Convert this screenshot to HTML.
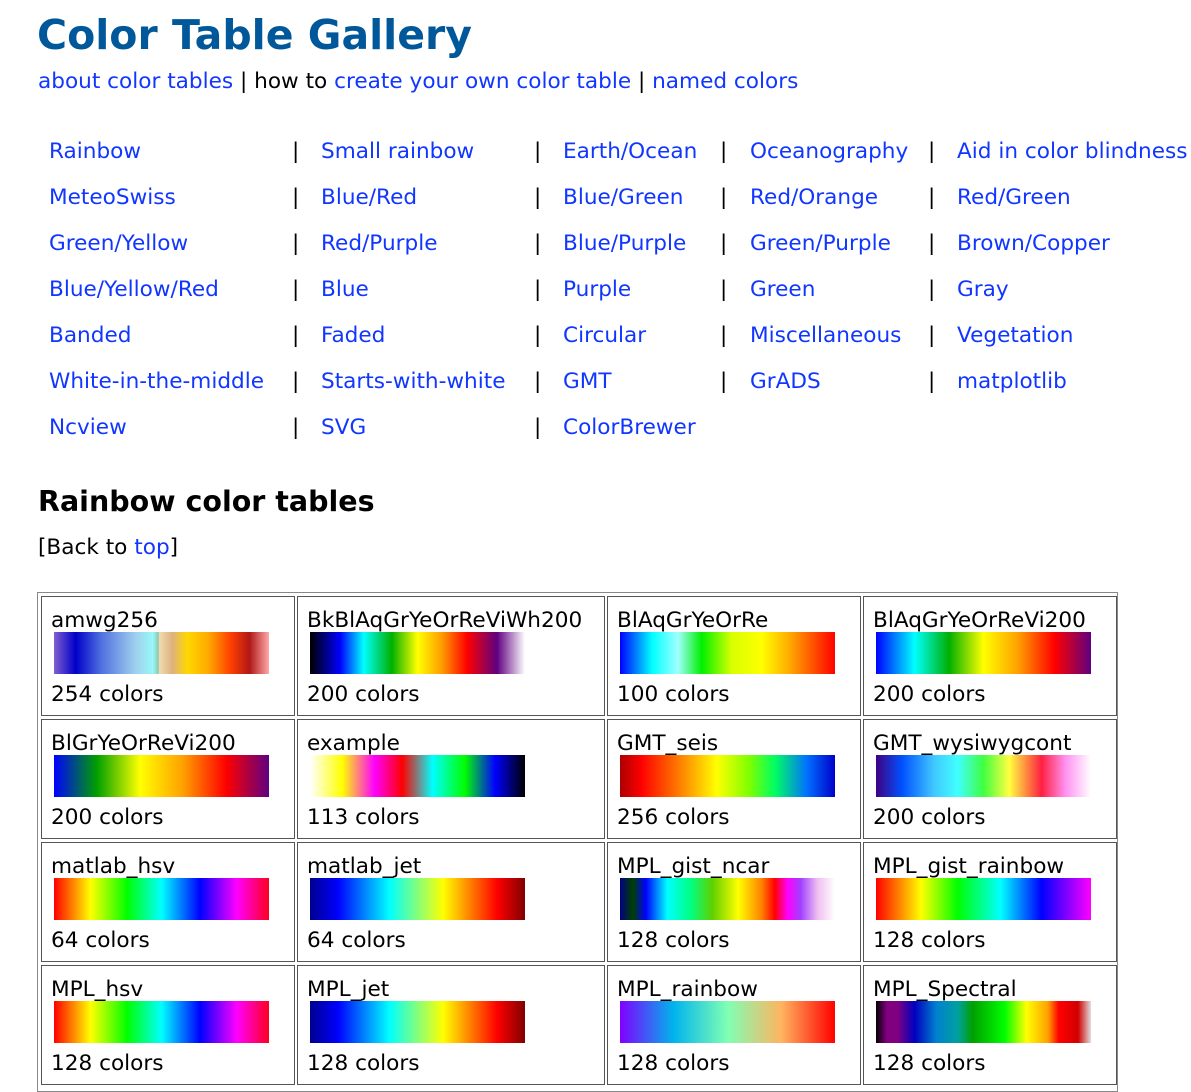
<!DOCTYPE html>
<html><head><meta charset="utf-8"><style>
body{margin:0;width:1191px;height:1082px;overflow:hidden;background:#fff;font-family:"DejaVu Sans","Liberation Sans",sans-serif;font-size:21.6px;color:#000;position:relative}
a{color:#1036ff;text-decoration:none}
.abs{position:absolute;white-space:nowrap;line-height:26px}
h1{position:absolute;left:37px;top:7px;margin:0;font-size:41px;font-weight:bold;color:#00589a;letter-spacing:0px;line-height:56px;white-space:nowrap}
h2{position:absolute;left:38px;top:485px;margin:0;font-size:28.5px;font-weight:bold;line-height:34px;white-space:nowrap}
.outer{position:absolute;left:37px;top:592px;width:1081px;height:500px;border:1px solid #888;box-sizing:border-box}
.cell{position:absolute;height:120px;border:1px solid #555;box-sizing:border-box}
.cell .n{position:absolute;left:9px;top:11px;line-height:26px;white-space:nowrap}
.cell .c{position:absolute;left:9px;top:85px;line-height:26px;white-space:nowrap}
.cell .b{position:absolute;left:12px;top:35px;width:215px;height:42px}
</style></head><body>
<h1>Color Table Gallery</h1>
<div class="abs" style="left:38px;top:69px"><a>about color tables</a> | how to <a>create your own color table</a> | <a>named colors</a></div>

<div class="abs" style="left:49px;top:139px"><a>Rainbow</a></div>
<div class="abs" style="left:49px;top:185px"><a>MeteoSwiss</a></div>
<div class="abs" style="left:49px;top:231px"><a>Green/Yellow</a></div>
<div class="abs" style="left:49px;top:277px"><a>Blue/Yellow/Red</a></div>
<div class="abs" style="left:49px;top:323px"><a>Banded</a></div>
<div class="abs" style="left:49px;top:369px"><a>White-in-the-middle</a></div>
<div class="abs" style="left:49px;top:415px"><a>Ncview</a></div>

<div class="abs" style="left:292px;line-height:46px;top:129px">|<br>|<br>|<br>|<br>|<br>|<br>|</div>
<div class="abs" style="left:321px;top:139px"><a>Small rainbow</a></div>
<div class="abs" style="left:321px;top:185px"><a>Blue/Red</a></div>
<div class="abs" style="left:321px;top:231px"><a>Red/Purple</a></div>
<div class="abs" style="left:321px;top:277px"><a>Blue</a></div>
<div class="abs" style="left:321px;top:323px"><a>Faded</a></div>
<div class="abs" style="left:321px;top:369px"><a>Starts-with-white</a></div>
<div class="abs" style="left:321px;top:415px"><a>SVG</a></div>

<div class="abs" style="left:534px;line-height:46px;top:129px">|<br>|<br>|<br>|<br>|<br>|<br>|</div>
<div class="abs" style="left:563px;top:139px"><a>Earth/Ocean</a></div>
<div class="abs" style="left:563px;top:185px"><a>Blue/Green</a></div>
<div class="abs" style="left:563px;top:231px"><a>Blue/Purple</a></div>
<div class="abs" style="left:563px;top:277px"><a>Purple</a></div>
<div class="abs" style="left:563px;top:323px"><a>Circular</a></div>
<div class="abs" style="left:563px;top:369px"><a>GMT</a></div>
<div class="abs" style="left:563px;top:415px"><a>ColorBrewer</a></div>

<div class="abs" style="left:720px;line-height:46px;top:129px">|<br>|<br>|<br>|<br>|<br>|</div>
<div class="abs" style="left:750px;top:139px"><a>Oceanography</a></div>
<div class="abs" style="left:750px;top:185px"><a>Red/Orange</a></div>
<div class="abs" style="left:750px;top:231px"><a>Green/Purple</a></div>
<div class="abs" style="left:750px;top:277px"><a>Green</a></div>
<div class="abs" style="left:750px;top:323px"><a>Miscellaneous</a></div>
<div class="abs" style="left:750px;top:369px"><a>GrADS</a></div>

<div class="abs" style="left:928px;line-height:46px;top:129px">|<br>|<br>|<br>|<br>|<br>|</div>
<div class="abs" style="left:957px;top:139px"><a>Aid in color blindness</a></div>
<div class="abs" style="left:957px;top:185px"><a>Red/Green</a></div>
<div class="abs" style="left:957px;top:231px"><a>Brown/Copper</a></div>
<div class="abs" style="left:957px;top:277px"><a>Gray</a></div>
<div class="abs" style="left:957px;top:323px"><a>Vegetation</a></div>
<div class="abs" style="left:957px;top:369px"><a>matplotlib</a></div>

<h2>Rainbow color tables</h2>
<div class="abs" style="left:38px;top:535px">[Back to <a>top</a>]</div>

<div class="outer"></div>
<!-- row 1 -->
<div class="cell" style="left:41px;top:596px;width:254px"><div class="n">amwg256</div><div class="b" style="background:linear-gradient(90deg,#8060d0 0%,#0000c8 10%,#5070e0 22%,#a0d0ee 38%,#98f8f8 46%,#90c8b0 48.5%,#f0dcb0 49%,#ddb080 55%,#ffd800 62%,#ffa800 72%,#ff4000 82%,#b01818 91%,#ffa8a8 100%)"></div><div class="c">254 colors</div></div>
<div class="cell" style="left:297px;top:596px;width:308px"><div class="n">BkBlAqGrYeOrReViWh200</div><div class="b" style="background:linear-gradient(90deg,#000 0%,#0000ff 14%,#00ffff 25%,#00b000 38%,#ffff00 50%,#ffa000 61%,#ff0000 73%,#600080 87%,#fff 100%)"></div><div class="c">200 colors</div></div>
<div class="cell" style="left:607px;top:596px;width:254px"><div class="n">BlAqGrYeOrRe</div><div class="b" style="background:linear-gradient(90deg,#0000ff 0%,#00ffff 15%,#a0ffff 27%,#00f000 38%,#d8ff00 52%,#ffff00 66%,#ffb000 78%,#ff0000 100%)"></div><div class="c">100 colors</div></div>
<div class="cell" style="left:863px;top:596px;width:254px"><div class="n">BlAqGrYeOrReVi200</div><div class="b" style="background:linear-gradient(90deg,#0000ff 0%,#00ffff 18%,#00b000 34%,#ffff00 50%,#ffa000 66%,#ff0000 83%,#600080 100%)"></div><div class="c">200 colors</div></div>
<!-- row 2 -->
<div class="cell" style="left:41px;top:719px;width:254px"><div class="n">BlGrYeOrReVi200</div><div class="b" style="background:linear-gradient(90deg,#0000ff 0%,#00a000 20%,#ffff00 40%,#ffa000 60%,#ff0000 80%,#600080 100%)"></div><div class="c">200 colors</div></div>
<div class="cell" style="left:297px;top:719px;width:308px"><div class="n">example</div><div class="b" style="background:linear-gradient(90deg,#fff 0%,#ffff00 15%,#ff00ff 30%,#ff0000 43%,#00ffff 57%,#00ff00 72%,#0000ff 86%,#000 100%)"></div><div class="c">113 colors</div></div>
<div class="cell" style="left:607px;top:719px;width:254px"><div class="n">GMT_seis</div><div class="b" style="background:linear-gradient(90deg,#aa0000 0%,#ff0000 10%,#ff8000 28%,#ffff00 45%,#80ff00 60%,#00ff60 72%,#0070ff 87%,#0000cc 100%)"></div><div class="c">256 colors</div></div>
<div class="cell" style="left:863px;top:719px;width:254px"><div class="n">GMT_wysiwygcont</div><div class="b" style="background:linear-gradient(90deg,#400080 0%,#0050ff 12%,#40c8ff 27%,#40ffff 38%,#40ff40 50%,#ffff40 62%,#ff2040 77%,#ff90f0 88%,#fff 100%)"></div><div class="c">200 colors</div></div>
<!-- row 3 -->
<div class="cell" style="left:41px;top:842px;width:254px"><div class="n">matlab_hsv</div><div class="b" style="background:linear-gradient(90deg,#ff0000 0%,#ffff00 17%,#00ff00 34%,#00ffff 50%,#0000ff 68%,#ff00ff 85%,#ff0020 100%)"></div><div class="c">64 colors</div></div>
<div class="cell" style="left:297px;top:842px;width:308px"><div class="n">matlab_jet</div><div class="b" style="background:linear-gradient(90deg,#00008f 0%,#0000ff 13%,#00ffff 37%,#ffff00 62%,#ff0000 87%,#800000 100%)"></div><div class="c">64 colors</div></div>
<div class="cell" style="left:607px;top:842px;width:254px"><div class="n">MPL_gist_ncar</div><div class="b" style="background:linear-gradient(90deg,#000080 0%,#004000 6%,#0000ff 12%,#00ffff 22%,#00ff80 33%,#60d000 43%,#ffff00 55%,#ff8000 66%,#ff0000 72%,#ff00ff 78%,#a040ff 84%,#f0c0f0 92%,#fff 100%)"></div><div class="c">128 colors</div></div>
<div class="cell" style="left:863px;top:842px;width:254px"><div class="n">MPL_gist_rainbow</div><div class="b" style="background:linear-gradient(90deg,#ff0000 0%,#ffff00 21%,#00ff00 38%,#00ffff 58%,#0000ff 77%,#ff00ff 100%)"></div><div class="c">128 colors</div></div>
<!-- row 4 -->
<div class="cell" style="left:41px;top:965px;width:254px"><div class="n">MPL_hsv</div><div class="b" style="background:linear-gradient(90deg,#ff0000 0%,#ffff00 17%,#00ff00 34%,#00ffff 50%,#0000ff 68%,#ff00ff 85%,#ff0020 100%)"></div><div class="c">128 colors</div></div>
<div class="cell" style="left:297px;top:965px;width:308px"><div class="n">MPL_jet</div><div class="b" style="background:linear-gradient(90deg,#00008f 0%,#0000ff 13%,#00ffff 37%,#ffff00 62%,#ff0000 87%,#800000 100%)"></div><div class="c">128 colors</div></div>
<div class="cell" style="left:607px;top:965px;width:254px"><div class="n">MPL_rainbow</div><div class="b" style="background:linear-gradient(90deg,#8000ff 0%,#00b4ec 25%,#80ffb4 50%,#ffb460 75%,#ff0000 100%)"></div><div class="c">128 colors</div></div>
<div class="cell" style="left:863px;top:965px;width:254px"><div class="n">MPL_Spectral</div><div class="b" style="background:linear-gradient(90deg,#000 0%,#800080 5%,#800080 10%,#0000c0 18%,#0080d0 28%,#00a0a0 38%,#00a000 45%,#00ff00 60%,#ffff00 70%,#ffa000 80%,#ff0000 85%,#d00000 94%,#e0e0e0 100%)"></div><div class="c">128 colors</div></div>
</body></html>
